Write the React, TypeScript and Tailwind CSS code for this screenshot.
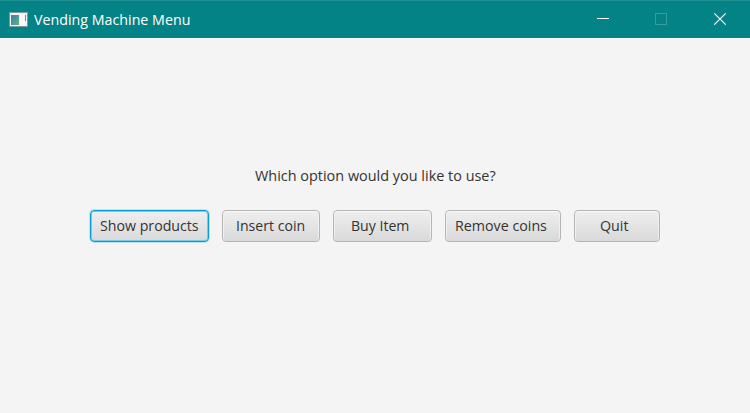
type Option = { label: string; box: string; text: string; focused?: boolean };

const options: Option[] = [
  { label: 'Show products', box: 'w-[119px] pl-[9px]', text: 'scale-x-[0.945]', focused: true },
  { label: 'Insert coin', box: 'w-[98px] pl-[13px]', text: 'scale-x-[0.94]' },
  { label: 'Buy Item', box: 'w-[99px] pl-[17px]', text: 'scale-x-[0.94]' },
  { label: 'Remove coins', box: 'w-[116px] pl-[9px]', text: 'scale-x-[0.95]' },
  { label: 'Quit', box: 'w-[86px] pl-[25px]', text: 'scale-x-[0.95]' },
];

function MenuButton({ label, box, text, focused }: Option) {
  const frame = focused
    ? 'border-[#039ed3] shadow-[0_0_0_1px_#b8e6f5,inset_0_0_0_1px_#7cc9e4]'
    : 'border-[#b5b5b5] shadow-[inset_0_1px_0_#fafafa,inset_1px_0_0_#f0f0f0,inset_-1px_0_0_#f0f0f0]';
  return (
    <button
      className={`flex h-8 shrink-0 items-center rounded-[4px] border bg-linear-to-b from-[#efefef] to-[#d9d9d9] pb-0.5 whitespace-nowrap ${box} ${frame}`}
    >
      <span className={`origin-left ${text}`}>{label}</span>
    </button>
  );
}

function AppIcon() {
  return (
    <svg width="19" height="16" viewBox="0 0 19 16" shapeRendering="crispEdges">
      <defs>
        <linearGradient id="pane" x1="0" y1="0" x2="1" y2="1">
          <stop offset="0" stopColor="#4778a8" />
          <stop offset="1" stopColor="#5cb487" />
        </linearGradient>
      </defs>
      <rect x="0" y="0" width="19" height="15" fill="#829a9c" />
      <rect x="1" y="1" width="17" height="13" fill="#f3f3f3" />
      <rect x="2" y="3" width="8" height="10" fill="url(#pane)" />
      <rect x="11" y="3" width="5" height="10" fill="#fafafa" />
      <rect x="16" y="3" width="1" height="6" fill="#4f9a96" />
    </svg>
  );
}

export default function App() {
  return (
    <div className="flex h-[413px] w-[750px] flex-col bg-[#f4f4f4] font-['Open_Sans','Noto_Sans',sans-serif] text-[15px] text-[#333333]">
      <header className="flex h-[38px] shrink-0 items-center border-t border-[#1e8f91] bg-[#048387] pl-[9px] text-white">
        <AppIcon />
        <h1 className="ml-[6px] origin-left scale-x-[0.95] text-[15px] whitespace-nowrap">Vending Machine Menu</h1>
        <div className="ml-auto flex items-center">
          <svg width="153" height="37" viewBox="597 1 153 37" fill="none">
            <path d="M597 18.5H609" stroke="#fff" />
            <rect x="655.5" y="13.5" width="11" height="11" stroke="#369c9f" />
            <path d="M714.3 13.3L725.7 24.7M725.7 13.3L714.3 24.7" stroke="#fff" strokeWidth="1.2" />
          </svg>
        </div>
      </header>
      <main className="flex flex-col pt-[127px]">
        <p className="ml-[255px] h-5 origin-left scale-x-[0.962] leading-5 whitespace-nowrap">
          Which option would you like to use?
        </p>
        <div className="mt-[25px] flex gap-[13px] pl-[90px]">
          {options.map((option) => (
            <MenuButton key={option.label} {...option} />
          ))}
        </div>
      </main>
    </div>
  );
}
